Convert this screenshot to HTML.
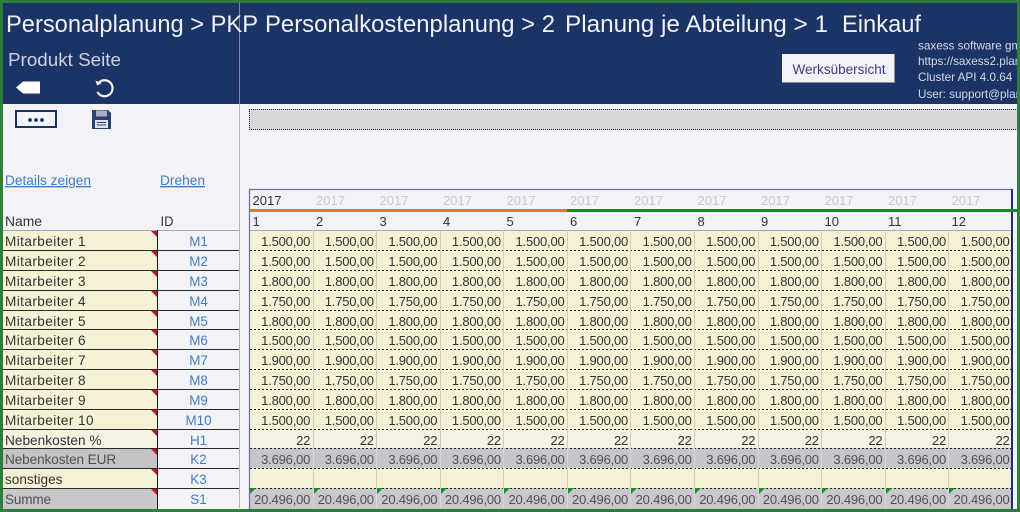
<!DOCTYPE html>
<html lang="de"><head><meta charset="utf-8"><title>Personalplanung</title>
<style>
html,body{margin:0;padding:0}
body{width:1020px;height:512px;overflow:hidden;position:relative;background:#f3f2f6;font-family:"Liberation Sans",sans-serif}
.abs{position:absolute}
.hd{left:3px;top:3px;width:1014px;height:101px;background:#1c3366}
.g{position:absolute;background:#2f7d3e}
.vl{left:239px;top:104px;width:1px;height:404px;background:#b2b3bb}
.vh{left:239px;top:3px;width:1px;height:101px;background:#7f8aa6}
.bar{left:249px;top:109px;width:768px;height:19px;background:#d8d7da;border-top:1px dotted #222;border-bottom:1px dotted #222;border-left:1px dotted #222}
.btn{left:782px;top:54px;width:112px;height:28px;background:#f3f2f8;border-right:1px solid #8c8f9c;border-bottom:1px solid #8c8f9c}
.l{position:absolute;left:3px;width:236px;height:20px;box-sizing:border-box;border-top:1px solid #2a2a2a}
.l i{position:absolute;left:0;top:0;width:154px;height:19px;background:#f5f1d4}
.l b{position:absolute;left:154px;top:-1px;width:1px;height:21px;background:#1a1a1a}
.l u{position:absolute;left:148px;top:0;width:0;height:0;border-top:6px solid #c4122e;border-left:6px solid transparent}
.l span{position:absolute;left:2px;top:0;font-size:13.6px;line-height:22px;letter-spacing:.42px;color:#333;white-space:nowrap}
.l em{position:absolute;left:155px;width:81px;top:0;text-align:center;font-style:normal;font-size:13.4px;line-height:22px;color:#3f7cc8}
.r{position:absolute;left:250px;width:763px;height:20px;display:grid;grid-template-columns:repeat(12,1fr);background-color:#f5f1d4;background-image:repeating-linear-gradient(90deg,#222 0 2px,transparent 2px 4px);background-size:100% 1px;background-repeat:no-repeat;font-size:13px;letter-spacing:-.2px;line-height:24px;color:#333;text-align:right}
.r span{display:block;padding-right:2.4px;border-right:1px solid #d2cfb8;height:20px;position:relative}
.p{background-color:#f5f2e2}.k{background-color:#c6c5ca;color:#505050}.s{background-color:#c9c9cd;color:#505050}
.s span{border-right-color:#d8d8da}
.k span{border-right-color:#d8d8da}
.s span:before{content:"";position:absolute;left:0;top:0;border-top:6px solid #1f8a2a;border-right:6px solid transparent}
</style></head><body>
<div class="abs hd"></div>
<div class="abs bar"></div>
<div class="abs btn"></div>

<!-- grid rows -->
<div class="r" style="top:230px;background-image:linear-gradient(#a8a8a8,#a8a8a8)"><span>1.500,00</span><span>1.500,00</span><span>1.500,00</span><span>1.500,00</span><span>1.500,00</span><span>1.500,00</span><span>1.500,00</span><span>1.500,00</span><span>1.500,00</span><span>1.500,00</span><span>1.500,00</span><span>1.500,00</span></div>
<div class="r" style="top:250px"><span>1.500,00</span><span>1.500,00</span><span>1.500,00</span><span>1.500,00</span><span>1.500,00</span><span>1.500,00</span><span>1.500,00</span><span>1.500,00</span><span>1.500,00</span><span>1.500,00</span><span>1.500,00</span><span>1.500,00</span></div>
<div class="r" style="top:270px"><span>1.800,00</span><span>1.800,00</span><span>1.800,00</span><span>1.800,00</span><span>1.800,00</span><span>1.800,00</span><span>1.800,00</span><span>1.800,00</span><span>1.800,00</span><span>1.800,00</span><span>1.800,00</span><span>1.800,00</span></div>
<div class="r" style="top:290px"><span>1.750,00</span><span>1.750,00</span><span>1.750,00</span><span>1.750,00</span><span>1.750,00</span><span>1.750,00</span><span>1.750,00</span><span>1.750,00</span><span>1.750,00</span><span>1.750,00</span><span>1.750,00</span><span>1.750,00</span></div>
<div class="r" style="top:310px"><span>1.800,00</span><span>1.800,00</span><span>1.800,00</span><span>1.800,00</span><span>1.800,00</span><span>1.800,00</span><span>1.800,00</span><span>1.800,00</span><span>1.800,00</span><span>1.800,00</span><span>1.800,00</span><span>1.800,00</span></div>
<div class="r" style="top:329px"><span>1.500,00</span><span>1.500,00</span><span>1.500,00</span><span>1.500,00</span><span>1.500,00</span><span>1.500,00</span><span>1.500,00</span><span>1.500,00</span><span>1.500,00</span><span>1.500,00</span><span>1.500,00</span><span>1.500,00</span></div>
<div class="r" style="top:349px"><span>1.900,00</span><span>1.900,00</span><span>1.900,00</span><span>1.900,00</span><span>1.900,00</span><span>1.900,00</span><span>1.900,00</span><span>1.900,00</span><span>1.900,00</span><span>1.900,00</span><span>1.900,00</span><span>1.900,00</span></div>
<div class="r" style="top:369px"><span>1.750,00</span><span>1.750,00</span><span>1.750,00</span><span>1.750,00</span><span>1.750,00</span><span>1.750,00</span><span>1.750,00</span><span>1.750,00</span><span>1.750,00</span><span>1.750,00</span><span>1.750,00</span><span>1.750,00</span></div>
<div class="r" style="top:389px"><span>1.800,00</span><span>1.800,00</span><span>1.800,00</span><span>1.800,00</span><span>1.800,00</span><span>1.800,00</span><span>1.800,00</span><span>1.800,00</span><span>1.800,00</span><span>1.800,00</span><span>1.800,00</span><span>1.800,00</span></div>
<div class="r" style="top:409px"><span>1.500,00</span><span>1.500,00</span><span>1.500,00</span><span>1.500,00</span><span>1.500,00</span><span>1.500,00</span><span>1.500,00</span><span>1.500,00</span><span>1.500,00</span><span>1.500,00</span><span>1.500,00</span><span>1.500,00</span></div>
<div class="r p" style="top:429px"><span>22</span><span>22</span><span>22</span><span>22</span><span>22</span><span>22</span><span>22</span><span>22</span><span>22</span><span>22</span><span>22</span><span>22</span></div>
<div class="r k" style="top:448px"><span>3.696,00</span><span>3.696,00</span><span>3.696,00</span><span>3.696,00</span><span>3.696,00</span><span>3.696,00</span><span>3.696,00</span><span>3.696,00</span><span>3.696,00</span><span>3.696,00</span><span>3.696,00</span><span>3.696,00</span></div>
<div class="r" style="top:468px"><span></span><span></span><span></span><span></span><span></span><span></span><span></span><span></span><span></span><span></span><span></span><span></span></div>
<div class="r s" style="top:488px;height:21px"><span>20.496,00</span><span>20.496,00</span><span>20.496,00</span><span>20.496,00</span><span>20.496,00</span><span>20.496,00</span><span>20.496,00</span><span>20.496,00</span><span>20.496,00</span><span>20.496,00</span><span>20.496,00</span><span>20.496,00</span></div>

<!-- left rows -->
<div class="l" style="top:230px;border-top:1px solid #a8a8a8"><i></i><b></b><u></u><span>Mitarbeiter 1</span><em>M1</em></div>
<div class="l" style="top:250px"><i></i><b></b><u></u><span>Mitarbeiter 2</span><em>M2</em></div>
<div class="l" style="top:270px"><i></i><b></b><u></u><span>Mitarbeiter 3</span><em>M3</em></div>
<div class="l" style="top:290px"><i></i><b></b><u></u><span>Mitarbeiter 4</span><em>M4</em></div>
<div class="l" style="top:310px"><i></i><b></b><u></u><span>Mitarbeiter 5</span><em>M5</em></div>
<div class="l" style="top:329px"><i></i><b></b><u></u><span>Mitarbeiter 6</span><em>M6</em></div>
<div class="l" style="top:349px"><i></i><b></b><u></u><span>Mitarbeiter 7</span><em>M7</em></div>
<div class="l" style="top:369px"><i></i><b></b><u></u><span>Mitarbeiter 8</span><em>M8</em></div>
<div class="l" style="top:389px"><i></i><b></b><u></u><span>Mitarbeiter 9</span><em>M9</em></div>
<div class="l" style="top:409px"><i></i><b></b><u></u><span>Mitarbeiter 10</span><em>M10</em></div>
<div class="l" style="top:429px"><i style="background:#f5f2e2"></i><b></b><u></u><span style="letter-spacing:.04px">Nebenkosten %</span><em>H1</em></div>
<div class="l" style="top:448px"><i style="background:#c4c3c6"></i><b></b><u></u><span style="color:#505050;letter-spacing:-.1px">Nebenkosten EUR</span><em>K2</em></div>
<div class="l" style="top:468px"><i></i><b></b><u></u><span style="letter-spacing:0">sonstiges</span><em>K3</em></div>
<div class="l" style="top:488px;height:21px"><i style="background:#c8c8cb;height:20px"></i><b></b><u></u><span style="color:#505050;letter-spacing:-.18px">Summe</span><em>S1</em></div>

<div class="abs vl"></div>
<div class="abs vh"></div>

<!-- text & icon overlay -->
<svg class="abs" style="left:0;top:0" width="1020" height="512" viewBox="0 0 1020 512" font-family="'Liberation Sans',sans-serif">
  <g font-size="24" fill="#eef1f7">
    <text x="6" y="32" textLength="252" lengthAdjust="spacingAndGlyphs">Personalplanung &gt; PKP</text>
    <text x="265" y="32" textLength="290" lengthAdjust="spacingAndGlyphs">Personalkostenplanung &gt; 2</text>
    <text x="565" y="32" textLength="263" lengthAdjust="spacingAndGlyphs">Planung je Abteilung &gt; 1</text>
    <text x="842" y="32" textLength="79" lengthAdjust="spacingAndGlyphs">Einkauf</text>
  </g>
  <text x="8" y="66" font-size="18.500" fill="#ccd3e2" textLength="113" lengthAdjust="spacingAndGlyphs">Produkt Seite</text>
  <text x="792.500" y="74" font-size="13.500" fill="#3b3a8e" textLength="93" lengthAdjust="spacingAndGlyphs">Werksübersicht</text>

  <svg x="918" y="38" width="99" height="66" viewBox="0 0 99 66">
    <text x="0" y="11.500" font-size="11.700" fill="#d5dae6">saxess software gmbh</text>
    <text x="0" y="27" font-size="11.700" fill="#d5dae6">https://saxess2.planning</text>
    <text x="0" y="43" font-size="11.700" fill="#d5dae6">Cluster API 4.0.64</text>
    <text x="0" y="60" font-size="11.700" fill="#d5dae6">User: support@planning</text>
  </svg>

  <!-- back tag -->
  <path d="M16 87.500 L23 81.500 H40 V93.500 H23 Z" fill="#fff"/>
  <!-- refresh -->
  <path d="M99 82.500 A8 8 0 1 1 97.500 92" fill="none" stroke="#f2f4f8" stroke-width="2.200"/>
  <path d="M95.500 80.500 L97 85.500 L101.500 83.500 Z" fill="#f2f4f8"/>
  <!-- dots box -->
  <rect x="16" y="111" width="40" height="16" fill="none" stroke="#1c3366" stroke-width="2"/>
  <circle cx="30" cy="120" r="1.900" fill="#1c3366"/><circle cx="36" cy="120" r="1.900" fill="#1c3366"/><circle cx="42" cy="120" r="1.900" fill="#1c3366"/>
  <!-- floppy -->
  <path d="M92 110 H108 L111 113 V129 H92 Z" fill="#2a3f73"/>
  <rect x="96" y="110.500" width="11" height="6" fill="#aab0c2"/>
  <rect x="95" y="120" width="13" height="8" fill="#e4e5ec"/>
  <path d="M97 122.500 H106 M97 125 H106" stroke="#2a3f73" stroke-width="1"/>

  <!-- links -->
  <text x="5" y="185" font-size="13.500" fill="#3f7cc8" textLength="86" lengthAdjust="spacingAndGlyphs" text-decoration="underline">Details zeigen</text>
  <text x="160" y="185" font-size="13.500" fill="#3f7cc8" textLength="45" lengthAdjust="spacingAndGlyphs" text-decoration="underline">Drehen</text>
  <text x="5" y="226" font-size="13.500" fill="#333" textLength="37" lengthAdjust="spacingAndGlyphs">Name</text>
  <text x="160.500" y="226" font-size="13.500" fill="#333" textLength="13" lengthAdjust="spacingAndGlyphs">ID</text>

  <!-- year box -->
  <path d="M249.500 509 V189.500 H1012" fill="none" stroke="#6c70a6" stroke-width="1.200"/>
  <rect x="1011" y="189" width="2" height="320" fill="#1c2f70"/>
  <rect x="250" y="209" width="317" height="3" fill="#e07a2a"/>
  <rect x="567" y="209" width="450" height="3" fill="#18881f"/>

  <g font-size="13" fill="#c9c9ce">
    <text x="252.500" y="205" fill="#333">2017</text>
    <text x="316" y="205">2017</text><text x="379.500" y="205">2017</text><text x="443" y="205">2017</text><text x="506.500" y="205">2017</text>
    <text x="570" y="205">2017</text><text x="634" y="205">2017</text><text x="697.500" y="205">2017</text><text x="761" y="205">2017</text>
    <text x="824.500" y="205">2017</text><text x="888" y="205">2017</text><text x="951.500" y="205">2017</text>
  </g>
  <g font-size="13" fill="#333">
    <text x="252.500" y="226">1</text><text x="316" y="226">2</text><text x="379.500" y="226">3</text><text x="443" y="226">4</text>
    <text x="506.500" y="226">5</text><text x="570" y="226">6</text><text x="634" y="226">7</text><text x="697.500" y="226">8</text>
    <text x="761" y="226">9</text><text x="824.500" y="226">10</text><text x="888" y="226">11</text><text x="951.500" y="226">12</text>
  </g>
</svg>

<div class="g" style="left:0;top:0;width:1020px;height:3px"></div>
<div class="g" style="left:0;top:0;width:3px;height:512px"></div>
<div class="g" style="left:1017px;top:0;width:3px;height:512px"></div>
<div class="g" style="left:0;top:509px;width:1020px;height:3px"></div>
</body></html>
